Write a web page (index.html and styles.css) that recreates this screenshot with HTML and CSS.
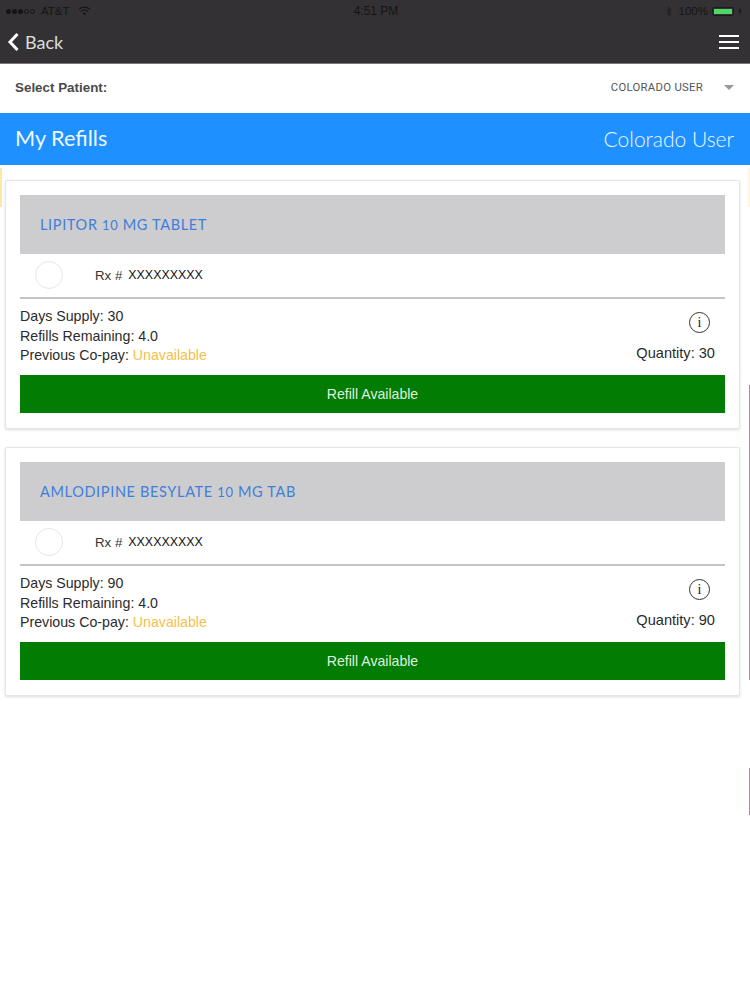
FILE: index.html
```html
<!DOCTYPE html>
<html lang="en">

<head>
    <meta charset="UTF-8">
    <meta name="viewport" content="width=device-width, initial-scale=1.0">
    <title>My Refills</title>
    <link rel="stylesheet" href="styles.css">
</head>

<body>
    <div class="topbar">
        <div class="status-bar">
            <div class="status-left">
                <span class="signal">
                    <i class="dot"></i><i class="dot"></i><i class="dot"></i><i class="dot empty"></i><i class="dot empty"></i>
                </span>
                <span>AT&amp;T</span>
                <svg class="wifi" width="13" height="10" viewBox="0 0 13 10">
                    <path d="M1 3.4 A8 8 0 0 1 12 3.4 M3 5.6 A5 5 0 0 1 10 5.6" fill="none" stroke="#151515" stroke-width="1.3"/>
                    <path d="M4.8 7.4 A2.5 2.5 0 0 1 8.2 7.4 L6.5 9.2 Z" fill="#151515"/>
                </svg>
            </div>
            <div class="status-time">4:51 PM</div>
            <div class="status-right">
                <svg width="6" height="11" viewBox="0 0 6 11">
                    <path d="M0.5 3 L5 7.5 L3 9.8 V1.2 L5 3.5 L0.5 8" fill="none" stroke="#1c1c1c" stroke-width="0.8"/>
                </svg>
                <span class="battery-text">100%</span>
                <span class="battery"><span class="battery-fill"></span></span>
                <svg width="4" height="8" viewBox="0 0 4 8"><path d="M2.6 0 L0.3 4.4 H1.8 L1.2 8 L3.7 3.4 H2.2 Z" fill="#151515"/></svg>
            </div>
        </div>
        <div class="nav-bar">
            <div class="back">
                <svg width="13" height="20" viewBox="0 0 13 20">
                    <path d="M10.5 2 L3 10 L10.5 18" fill="none" stroke="#fff" stroke-width="3"/>
                </svg>
                <span>Back</span>
            </div>
            <div class="menu-btn"><span></span><span></span><span></span></div>
        </div>
    </div>

    <div class="patient-row">
        <div class="patient-label">Select Patient:</div>
        <div class="patient-select">
            <span>COLORADO USER</span>
            <i class="caret"></i>
        </div>
    </div>

    <div class="title-bar">
        <div>My Refills</div>
        <div class="title-user">Colorado User</div>
    </div>

    <div class="content">
        <div class="edge edge-left"></div>
        <div class="edge edge-right"></div>
        <div class="edge edge-pink edge-pink-long"></div>
        <div class="edge edge-pink edge-pink-short"></div>

        <div class="card">
            <div class="card-head">LIPITOR <span class="num">10</span> MG TABLET</div>
            <div class="rx-row">
                <div class="rx-circle"></div>
                <div class="rx-label">Rx #</div>
                <div class="rx-value">XXXXXXXXX</div>
            </div>
            <div class="details">
                <div class="details-left">
                    <div>Days Supply: 30</div>
                    <div>Refills Remaining: 4.0</div>
                    <div>Previous Co-pay: <span class="unavailable">Unavailable</span></div>
                </div>
                <div class="details-right">
                    <div class="info-icon">i</div>
                    <div>Quantity: 30</div>
                </div>
            </div>
            <div class="refill-btn">Refill Available</div>
        </div>

        <div class="card">
            <div class="card-head">AMLODIPINE BESYLATE <span class="num">10</span> MG TAB</div>
            <div class="rx-row">
                <div class="rx-circle"></div>
                <div class="rx-label">Rx #</div>
                <div class="rx-value">XXXXXXXXX</div>
            </div>
            <div class="details">
                <div class="details-left">
                    <div>Days Supply: 90</div>
                    <div>Refills Remaining: 4.0</div>
                    <div>Previous Co-pay: <span class="unavailable">Unavailable</span></div>
                </div>
                <div class="details-right">
                    <div class="info-icon">i</div>
                    <div>Quantity: 90</div>
                </div>
            </div>
            <div class="refill-btn">Refill Available</div>
        </div>
    </div>
</body>

</html>
```

FILE: styles.css
```css
body {
    font-family: "Liberation Sans", Arial, sans-serif;
    margin: 0;
    background-color: white;
    color: #333;
    min-height: 1000px;
}

.topbar {
    background-color: #333133;
    height: 63px;
    border-bottom: 1px solid #777;
}

.status-bar {
    height: 22px;
    padding: 0 6px;
    display: flex;
    align-items: center;
    justify-content: space-between;
    position: relative;
    font-size: 11.5px;
    color: #151515;
}

.status-left,
.status-right {
    display: flex;
    align-items: center;
    gap: 5px;
}

.status-left {
    gap: 6px;
}

.signal {
    display: flex;
    gap: 1px;
}

.dot {
    width: 5px;
    height: 5px;
    border-radius: 50%;
    background-color: #151515;
    box-sizing: border-box;
}

.dot.empty {
    background: none;
    border: 1px solid #151515;
}

.wifi {
    margin-left: 2px;
}

.status-time {
    position: absolute;
    left: 0;
    right: 0;
    text-align: center;
    font-size: 12px;
    padding-left: 2px;
}

.status-right {
    gap: 4px;
    margin-right: 2px;
}

.status-right svg:first-child {
    margin-right: 3px;
}

.battery {
    width: 22px;
    height: 9px;
    padding: 1px;
    box-sizing: border-box;
    border: 1px solid #1c1c1c;
    border-radius: 2px;
    background-color: #333;
    display: block;
}

.battery-fill {
    display: block;
    height: 100%;
    background-color: #4cd964;
}

.nav-bar {
    height: 41px;
    padding: 0 11px 2px 7px;
    box-sizing: border-box;
    display: flex;
    align-items: center;
    justify-content: space-between;
}

.back {
    display: flex;
    align-items: center;
    gap: 5px;
    font-family: Lato, sans-serif;
    font-size: 18px;
    color: #ddd;
}

.menu-btn {
    display: flex;
    flex-direction: column;
    gap: 4px;
    width: 20px;
}

.menu-btn span {
    display: block;
    height: 2px;
    background-color: white;
}

.patient-row {
    height: 49px;
    padding: 0 15px 2px;
    box-sizing: border-box;
    display: flex;
    align-items: center;
    justify-content: space-between;
    background-color: white;
}

.patient-label {
    font-size: 13.4px;
    font-weight: bold;
    color: #4a4a4a;
}

.patient-select {
    display: flex;
    align-items: center;
    gap: 21px;
    font-family: Roboto, sans-serif;
    font-size: 11.3px;
    letter-spacing: 0.3px;
    color: #555;
}

.caret {
    width: 0;
    height: 0;
    border-left: 5px solid transparent;
    border-right: 5px solid transparent;
    border-top: 5px solid #999;
    margin-right: 1px;
}

.title-bar {
    height: 52px;
    padding: 0 16px 2px 15px;
    box-sizing: border-box;
    display: flex;
    align-items: center;
    justify-content: space-between;
    background-color: #1e90ff;
    font-family: Lato, sans-serif;
    font-size: 21.7px;
    color: #eef7ff;
}

.title-user {
    font-size: 21px;
    font-weight: 300;
}

.content {
    position: relative;
    padding: 15px 10px 0 5px;
    display: flex;
    flex-direction: column;
    gap: 18px;
}

.edge {
    position: absolute;
    width: 2px;
    top: 3px;
    height: 39px;
    background-color: #fbe9a8;
}

.edge-left {
    left: 0;
}

.edge-right {
    right: 0;
    background-color: #fdf6dc;
}

.edge-pink {
    right: 0;
    width: 1px;
    background-color: #b9829c;
}

.edge-pink-long {
    top: 220px;
    height: 295px;
}

.edge-pink-short {
    top: 603px;
    height: 47px;
}

.card {
    height: 249px;
    box-sizing: border-box;
    padding: 15px;
    background-color: white;
    border: 1px solid #e6e6e6;
    border-radius: 2px;
    box-shadow: 0 1px 3px rgba(0, 0, 0, 0.14);
    display: flex;
    flex-direction: column;
}

.card-head {
    height: 59px;
    margin: -1px -1px 0 -1px;
    padding-left: 20px;
    display: flex;
    align-items: center;
    white-space: pre;
    background-color: #cdccce;
    font-family: Lato, sans-serif;
    font-size: 14.5px;
    letter-spacing: 0.65px;
    color: #3f7fdc;
}

.num {
    font-size: 13px;
}

.rx-row {
    height: 43px;
    margin: 0 -1px;
    display: flex;
    align-items: center;
    border-bottom: 2px solid #c4c4c4;
    font-size: 13.3px;
}

.rx-circle {
    width: 26px;
    height: 26px;
    margin-left: 15px;
    margin-top: -1px;
    border: 1px solid #e6e6e6;
    border-radius: 50%;
}

.rx-label {
    margin-left: 32px;
    color: #333;
}

.rx-value {
    margin-left: 6px;
    margin-top: -2px;
    font-size: 12.4px;
    color: #111;
}

.details {
    height: 76px;
    margin: 0 -1px;
    display: flex;
    justify-content: space-between;
    font-size: 14.2px;
    color: #2b2b2b;
}

.details-left {
    padding-top: 8px;
    line-height: 19.5px;
}

.unavailable {
    color: #f4c04e;
}

.details-right {
    padding: 13px 10px 0 0;
    display: flex;
    flex-direction: column;
    align-items: flex-end;
    gap: 13px;
    font-size: 14.6px;
    line-height: 15px;
}

.info-icon {
    width: 19px;
    height: 19px;
    margin-right: 5px;
    border: 1px solid #333;
    border-radius: 50%;
    text-align: center;
    font-family: "Liberation Serif", serif;
    font-size: 14px;
    line-height: 19px;
    color: #222;
}

.refill-btn {
    height: 38px;
    margin: 0 -1px;
    padding-bottom: 1px;
    box-sizing: border-box;
    display: flex;
    align-items: center;
    justify-content: center;
    background-color: #037c03;
    font-size: 14.1px;
    color: #dff0df;
}
```
